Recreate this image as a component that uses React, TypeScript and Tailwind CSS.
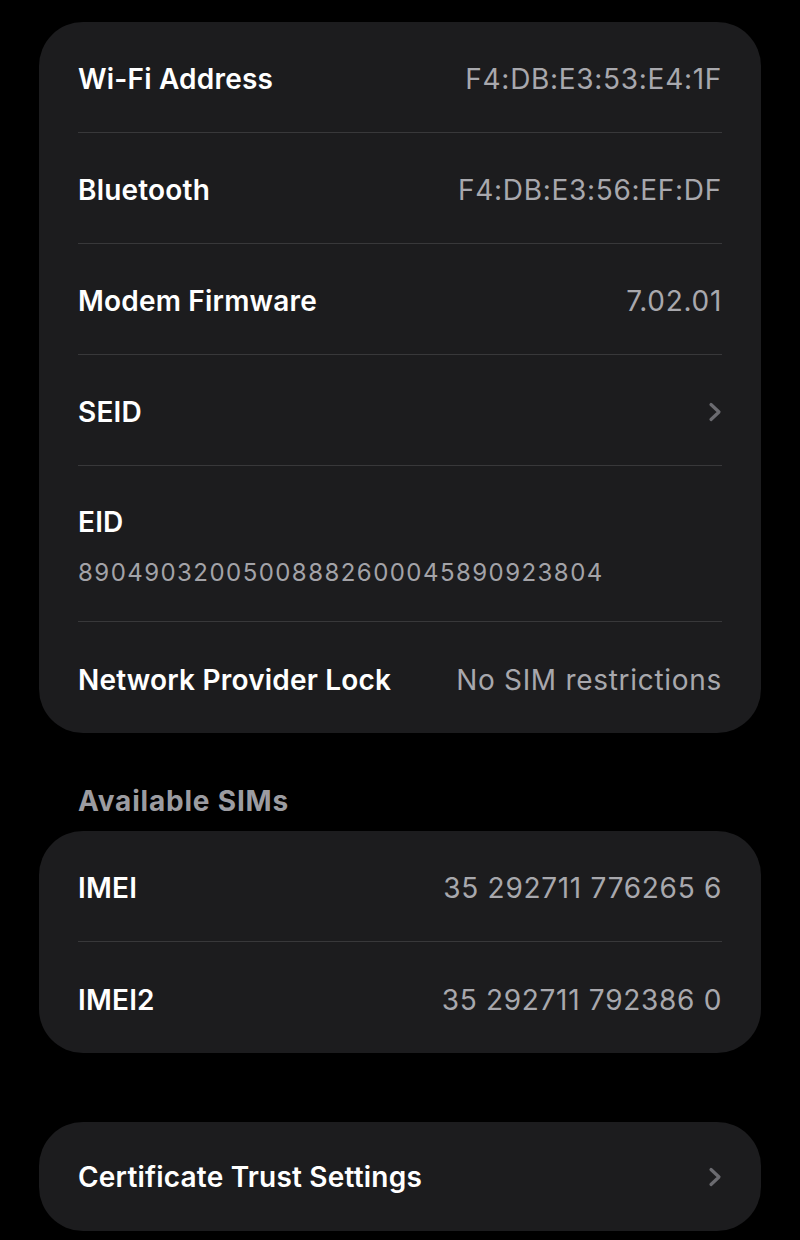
import React from 'react';

const font = { fontFamily: 'Inter, "Noto Sans", sans-serif' };

const Chevron = () => (
  <svg width="14" height="20" viewBox="0 0 14 20" className="shrink-0">
    <polyline points="3,2.5 11,10 3,17.5" fill="none" stroke="#6b6b70" strokeWidth="3.2" strokeLinecap="round" strokeLinejoin="round" />
  </svg>
);

interface RowProps {
  label: string;
  value?: string;
  chevron?: boolean;
  last?: boolean;
}

const Row: React.FC<RowProps> = ({ label, value, chevron, last }) => (
  <div className={`h-[111px] flex items-center justify-between pt-[4px] ${last ? '' : 'border-b border-[#38383a]'}`}>
    <span className="text-[28px] font-semibold text-white tracking-[0.2px]">{label}</span>
    {value && <span className="text-[28px] text-[#a8a8ad] tracking-[0.7px]">{value}</span>}
    {chevron && <Chevron />}
  </div>
);

export default function App() {
  return (
    <div className="w-[800px] h-[1240px] overflow-hidden bg-black px-[39px] pt-[22px]" style={font}>
      {/* Device info */}
      <div className="rounded-[44px] bg-[#1c1c1e] px-[39px]">
        <Row label="Wi-Fi Address" value="F4:DB:E3:53:E4:1F" />
        <Row label="Bluetooth" value="F4:DB:E3:56:EF:DF" />
        <Row label="Modem Firmware" value="7.02.01" />
        <Row label="SEID" chevron />
        <div className="h-[156px] border-b border-[#38383a] pt-[39px]">
          <div className="text-[28px] leading-[34px] font-semibold text-white tracking-[0.2px]">EID</div>
          <div className="mt-[19px] text-[24px] leading-[30px] text-[#a3a3a8] tracking-[1.45px]">89049032005008882600045890923804</div>
        </div>
        <Row label="Network Provider Lock" value="No SIM restrictions" last />
      </div>

      {/* SIMs */}
      <div className="mt-[53px] mb-[15px] pl-[39px] text-[28px] leading-[30px] font-bold text-[#9c9ca1] tracking-[0.8px]">Available SIMs</div>
      <div className="rounded-[44px] bg-[#1c1c1e] px-[39px]">
        <Row label="IMEI" value="35 292711 776265 6" />
        <Row label="IMEI2" value="35 292711 792386 0" last />
      </div>

      {/* Certificates */}
      <div className="mt-[69px] rounded-[44px] bg-[#1c1c1e] px-[39px]">
        <div className="h-[109px] flex items-center justify-between pt-[1px]">
          <span className="text-[28px] font-semibold text-white tracking-[0.2px]">Certificate Trust Settings</span>
          <Chevron />
        </div>
      </div>
    </div>
  );
}
